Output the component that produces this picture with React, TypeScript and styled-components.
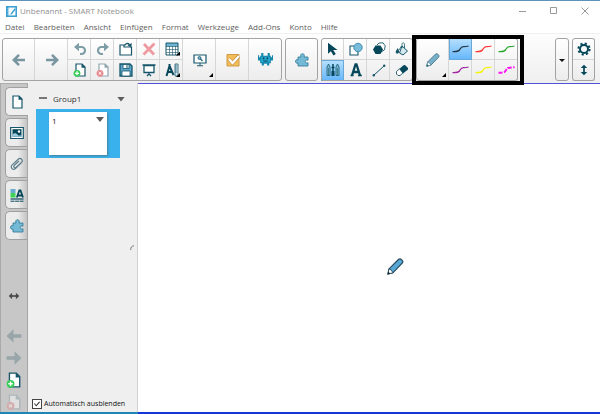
import React, { useState } from "react";
import styled, { createGlobalStyle, css } from "styled-components";

const ink = "#17566a";
const dark = "#06475a";
const sky = "#6fb4d3";
const muted = "#7f9da6";

const GlobalStyle = createGlobalStyle`
  *, *::before, *::after { box-sizing: border-box; }
  body { margin: 0; background: #fff; }
  body, button, input { font-family: "Open Sans", "Noto Sans", sans-serif; font-size: 8px; }
  button { margin: 0; padding: 0; border: 0; background: none; color: inherit; }
  svg { display: block; flex: none; }
`;

const Window = styled.div`
  display: flex;
  flex-direction: column;
  min-height: 100vh;
  border-top: 1px solid #5b93bd;
  background: #fff;
`;

const TitleBar = styled.header`
  display: flex;
  align-items: center;
  height: 20px;
  padding-left: 6px;
  gap: 3px;
  color: #909090;
`;

const Title = styled.h1`
  flex: 1;
  margin: 0;
  font-size: 8px;
  font-weight: 400;
  line-height: 12px;
`;

const WindowControls = styled.div`
  display: flex;
`;

const WindowButton = styled.button`
  display: grid;
  place-items: center;
  width: 31px;
  height: 18px;
`;

const MenuBar = styled.nav`
  display: flex;
  align-items: center;
  gap: 9px;
  height: 13px;
  padding-left: 5px;
  border-bottom: 1px solid #f0f0f0;
`;

const MenuItem = styled.button`
  line-height: 12px;
  color: #606060;
`;

const Toolbar = styled.div`
  display: flex;
  gap: 3px;
  height: 49px;
  padding: 4px 5px 2px 2px;
  background: linear-gradient(#fdfdfd, #efefef);
`;

const Group = styled.div`
  position: relative;
  display: flex;
  border-radius: 3px;
  background: linear-gradient(#fff, #ececec);
  &::before {
    content: "";
    position: absolute;
    inset: 0;
    z-index: 1;
    border: 1px solid #a3a3a3;
    border-radius: 3px;
    pointer-events: none;
  }
`;

const PenGroup = styled(Group)`
  &::after {
    content: "";
    position: absolute;
    inset: -3px -6px -4px -4px;
    z-index: 2;
    border: 4px solid #000;
    pointer-events: none;
  }
`;

const Spacer = styled.div`
  flex: 1;
`;

const Grid = styled.div<{ $cols: number }>`
  display: grid;
  grid-template-columns: repeat(${(p) => p.$cols}, 23px);
  grid-template-rows: 1fr 1fr;
`;

const SmallTool = styled.button<{ $active?: boolean }>`
  position: relative;
  display: grid;
  place-items: center;
  box-shadow: inset -1px -1px 0 #d6d6d6;
  ${(p) =>
    p.$active &&
    css`
      background: linear-gradient(#b9e1fd, #62b5fb);
      box-shadow: inset 0 0 0 1px #68a9da;
    `}
`;

const LargeTool = styled.button<{ $last?: boolean; $narrow?: boolean }>`
  position: relative;
  display: grid;
  place-items: center;
  width: ${(p) => (p.$narrow ? 14 : 33)}px;
  box-shadow: inset ${(p) => (p.$last ? 0 : -1)}px 0 0 #d6d6d6;
`;

const Corner = styled.span`
  position: absolute;
  right: 3px;
  bottom: 4px;
  width: 4px;
  height: 4px;
  background: #000;
  clip-path: polygon(100% 0, 100% 100%, 0 100%);
`;

const Workspace = styled.div`
  display: flex;
  flex: 1;
  border-bottom: 2px solid #1d86b4;
`;

const TabStrip = styled.aside`
  display: flex;
  flex-direction: column;
  width: 28px;
  border-left: 1px solid #aaa;
  border-top: 1px solid #adadad;
  border-right: 1px solid #a6a6a6;
  background: #c7c7c7;
`;

const TabList = styled.div`
  display: flex;
  flex-direction: column;
  gap: 2px;
  padding: 3px 0 0 4px;
`;

const Tab = styled.button<{ $active?: boolean }>`
  display: grid;
  place-items: center;
  height: 29px;
  margin-right: ${(p) => (p.$active ? -1 : 0)}px;
  border: 1px solid #a0a0a0;
  border-right: 0;
  border-radius: 5px 0 0 5px;
  background: ${(p) =>
    p.$active ? "#efefef" : "linear-gradient(90deg, #ececec 55%, #c4c4c4)"};
`;

const StripTools = styled.div`
  display: flex;
  flex: 1;
  flex-direction: column;
  align-items: center;
  justify-content: flex-end;
  gap: 6px;
  padding-bottom: 2px;
`;

const StripButton = styled.button<{ $apart?: boolean; $faded?: boolean }>`
  display: grid;
  place-items: center;
  width: 26px;
  height: 16px;
  margin-bottom: ${(p) => (p.$apart ? 18 : 0)}px;
  opacity: ${(p) => (p.$faded ? 0.45 : 1)};
`;

const Panel = styled.section`
  display: flex;
  flex-direction: column;
  width: 110px;
  border-right: 1px solid #d2d2d2;
  background: #efefef;
`;

const GroupHeader = styled.button`
  display: flex;
  align-items: center;
  gap: 6px;
  height: 26px;
  padding: 4px 12px 0 11px;
  color: #333;
`;

const GroupName = styled.span`
  flex: 1;
  text-align: left;
`;

const Selection = styled.div`
  display: flex;
  justify-content: center;
  margin: 0 17px 0 8px;
  padding: 3px 0;
  background: #38b1ec;
`;

const Thumbnail = styled.button`
  display: flex;
  align-items: flex-start;
  justify-content: space-between;
  width: 58px;
  height: 43px;
  padding: 3px 3px 0 3px;
  background: #fff;
  box-shadow: 1px 1px 2px #4a7f9c;
  color: #222;
  line-height: 11px;
`;

const Resizer = styled.div`
  display: flex;
  flex: 1;
  align-items: center;
  justify-content: flex-end;
  padding: 0 3px 62px 0;
`;

const Down = styled.span<{ $small?: boolean }>`
  width: ${(p) => (p.$small ? 6 : 8)}px;
  height: ${(p) => (p.$small ? 3 : 5)}px;
  margin-top: 2px;
  background: ${(p) => (p.$small ? "#111" : "#5c5c5c")};
  clip-path: polygon(0 0, 100% 0, 50% 100%);
`;

const AutoHide = styled.label`
  display: flex;
  align-items: center;
  gap: 2px;
  padding: 0 0 3px 4px;
  color: #111;
  font-size: 7px;
  line-height: 10px;
  white-space: nowrap;
`;

const Check = styled.input`
  position: relative;
  appearance: none;
  width: 10px;
  height: 10px;
  margin: 0;
  border: 1px solid #444;
  background: #fff;
  &:checked::after {
    content: "";
    position: absolute;
    inset: 1px;
    background: #333;
    clip-path: polygon(0 45%, 14% 36%, 36% 65%, 86% 8%, 100% 20%, 37% 92%);
  }
`;

const Canvas = styled.main`
  position: relative;
  flex: 1;
  margin-bottom: -2px;
  border-top: 1px solid #5050d8;
  border-bottom: 2px solid #1835d8;
  background: #fff;
`;

const PenPointer = styled.div`
  position: absolute;
  left: 54%;
  top: 53%;
`;

type IconProps = { size?: number; children: React.ReactNode };
const Icon = ({ size = 14, children }: IconProps) => (
  <svg width={size} height={size} viewBox="0 0 14 14" fill="none" aria-hidden="true">
    {children}
  </svg>
);

const LogoIcon = () => (
  <Icon size={11}>
    <path d="M0 0h14v14H0z" fill="#3b9fd2" />
    <path d="M3 2h9v10H3z" fill="#fff" />
    <path d="M1.500 3.500h3M1.500 7h3M1.500 10.500h3" stroke="#9ad0ea" />
    <path d="M6 9.500 11 3l1.500 1L7.500 10.500 5.500 11z" fill="#3b9fd2" />
  </Icon>
);
const ArrowIcon = ({ right, size, color = "#7996a0" }: { right?: boolean; size?: number; color?: string }) => (
  <Icon size={size}>
    <g transform={right ? "rotate(180 7 7)" : undefined}>
      <path d="M.5 7 6.500 1v4.500h7v3h-7V13z" fill={color} />
    </g>
  </Icon>
);
const NavIcon = ({ right }: { right?: boolean }) => (
  <Icon>
    <g transform={right ? "rotate(180 7 7)" : undefined}>
      <path d="M7 1.800 1.800 7 7 12.200M2 7h11" stroke="#7996a0" strokeWidth="2.600" />
    </g>
  </Icon>
);
const UndoIcon = ({ redo }: { redo?: boolean }) => (
  <Icon>
    <g transform={redo ? "translate(14 0) scale(-1 1)" : undefined}>
      <path d="M3 5h5.500a3.500 3.500 0 0 1 0 7H7" stroke={muted} strokeWidth="2.200" />
      <path d="M1 5 6 .8v8.400z" fill={muted} />
    </g>
  </Icon>
);
const PageIcon = ({ mark, size }: { mark?: "add" | "remove"; size?: number }) => {
  const gone = mark === "remove";
  const line = gone ? "#8fa6ae" : ink;
  return (
    <Icon size={size}>
      <path d="M3 1h6l3 3v9H3z" fill="#fff" stroke={line} strokeWidth="1.200" />
      <path d="M8.500.8v4h4z" fill={line} />
      {mark && <circle cx="4" cy="10.300" r="3.400" fill={gone ? "#e98a91" : "#35cf58"} />}
      {mark === "add" && <path d="M4 8.300v4M2 10.300h4" stroke="#fff" strokeWidth="1.200" />}
      {gone && <path d="m2.700 9 2.600 2.600m0-2.600-2.600 2.600" stroke="#fff" />}
    </Icon>
  );
};
const OpenIcon = () => (
  <Icon>
    <path d="M1 13V3h4v2h7.500v8z" fill="#fff" stroke={ink} strokeWidth="1.200" />
    <path d="M5.500 3.500c1-2.200 3.500-2.600 5-.8" stroke={ink} strokeWidth="1.400" />
    <path d="m12.800 1-.6 4.500-3.500-2z" fill={ink} />
  </Icon>
);
const DeleteIcon = () => (
  <Icon>
    <path d="m2 2 10 10.500M12.500 1.500 1.500 12.500" stroke="#ee9aa0" strokeWidth="2.800" />
  </Icon>
);
const TableIcon = () => (
  <Icon>
    <path d="M1 1h12v12H1z" fill="#fff" />
    <path d="M1 1h12v3.500H1z" fill={sky} />
    <path d="M1 1h12v12H1z" stroke={ink} />
    <path d="M1 4.500h12M1 7.500h12M1 10.500h12M4.500 4v9M7.500 4v9M10.500 4v9" stroke={ink} strokeWidth=".6" />
  </Icon>
);
const SaveIcon = () => (
  <Icon>
    <path d="M1 1h10l2 2v10H1z" fill="#5ba6ca" stroke={ink} strokeWidth="1.300" />
    <path d="M4 1.500h6v4H4zM3 8h8v5H3z" fill="#fff" stroke={ink} strokeWidth=".8" />
    <path d="M8 2v3" stroke={ink} />
  </Icon>
);
const ScreenIcon = () => (
  <Icon>
    <path d="M.5 2h13M2 2.500h10v7H2zM7 10v2M5 13l2-2 2 2" fill="#fff" stroke={ink} strokeWidth="1.300" />
  </Icon>
);
const MeasureIcon = () => (
  <Icon>
    <path d="M4.500 1v2M4.500 3 1.500 13M4.500 3l4 9M2.500 9h5" stroke={dark} strokeWidth="2" />
    <path d="M10 1h3v12h-3z" fill="#d9edf5" stroke={ink} strokeWidth=".8" />
    <path d="M10 3h2M10 5h2M10 7h2M10 9h2" stroke={ink} strokeWidth=".7" />
  </Icon>
);
const MonitorIcon = () => (
  <Icon>
    <path d="M1 2h12v8H1z" fill="#fff" stroke={ink} strokeWidth="1.200" />
    <circle cx="6.500" cy="5" r="1.500" fill={sky} stroke={ink} strokeWidth=".8" />
    <path d="m7.500 6 2 2M7 10v2M4 12.700h6" stroke={ink} strokeWidth="1.100" />
  </Icon>
);
const TaskIcon = () => (
  <Icon>
    <path d="M1 1.500h12v11.500H1z" fill="#f2bd58" stroke="#cf9b45" />
    <path d="m3 6 3.500 4L13 3" stroke="#b6853a" strokeWidth="3.400" />
    <path d="m3 6 3.500 4L13 3" stroke="#fff" strokeWidth="2.300" />
  </Icon>
);
const MonsterIcon = () => (
  <Icon size={15}>
    <path d="M3 1h2v2.500h4V1h2v2.500h1V5h1V3h1v5h-2v2.500h-1.500v2H8.500v-1.500h-3v1.500H3.500v-2H2V8H0V3h1v2h1V3.500h1z" fill="#1688ae" />
    <path d="M3 4.500h8V9.500H3z" fill="#26a8d0" />
    <path d="M4.500 5.200H6v1.500H4.500zM8 5.200h1.500v1.500H8zM5 8h4v.8H5z" fill="#064159" />
  </Icon>
);
const PuzzleIcon = () => (
  <Icon>
    <path d="M3 4h3c-.8-1.800 0-3.300 1.500-3.300S9.800 2.200 9 4h4v3.200c-2-.8-2.700.2-2.700 1.300s.7 2 2.700 1.300V13H3v-3C1.500 10.700.5 9.700.5 8.300S1.500 6.200 3 7z" fill="#74b9d6" stroke="#397f9b" strokeWidth=".9" />
  </Icon>
);
const SelectIcon = () => (
  <Icon>
    <path d="M2 .8v11l2.900-2.600L7.500 13.500l2.300-1.400L7.200 8h4.300z" fill={dark} />
  </Icon>
);
const ShapesIcon = () => (
  <Icon>
    <path d="M1 4h8v9H1z" fill="#fff" stroke={ink} strokeWidth="1.100" />
    <circle cx="9" cy="5.500" r="4.200" fill="#79bbd9" stroke="#3f8fb2" />
  </Icon>
);
const PolygonIcon = () => (
  <Icon>
    <path d="m5 3 2-2 4-.2 2.200 3-.7 4-3 2" fill="#fff" stroke={ink} strokeWidth=".9" />
    <path d="M3.500 3.500h5L11 7.500 8.500 12h-5L1 7.500z" fill={dark} />
  </Icon>
);
const BucketIcon = () => (
  <Icon>
    <path d="m7 4 5.500 5L8 13 4.500 11z" fill="#d4e8ef" stroke={ink} />
    <path d="M7 6V2.500C7 .3 9.500.3 9.500 2.500V6M6.500 4 4 8" stroke={ink} strokeWidth=".8" />
    <path d="M2.500 6C4 8 4.700 9.500 3.700 11c-1.300 1.200-3 .5-3-1C.7 8.500 2 8 2.500 6z" fill={ink} />
  </Icon>
);
const PensIcon = () => (
  <Icon>
    <path d="M1 12.500V4l1.500-3L4 4v8.500zM10 12.500V4l1.500-3L13 4v8.500z" fill="#80bfdb" stroke={ink} strokeWidth=".8" />
    <path d="M7 1v12M5.500 4.500h3" stroke={dark} strokeWidth="1.500" />
    <path d="M2.500 5v7M11.500 5v7" stroke={ink} strokeWidth=".6" />
    <path d="M5.500 8h3v5h-3z" fill={dark} />
  </Icon>
);
const TextIcon = () => (
  <Icon>
    <path d="m3 12.500 3.500-11h1l3.500 11M4.500 9h5" stroke={dark} strokeWidth="2.300" />
    <path d="M1.500 12.500h3M9 12.500h3.800" stroke={dark} strokeWidth="1.300" />
  </Icon>
);
const LineIcon = () => (
  <Icon>
    <path d="M2 12 12 3" stroke={ink} />
    <circle cx="1.800" cy="12.200" r="1.200" fill={ink} />
    <circle cx="12.200" cy="2.800" r="1.200" fill={ink} />
  </Icon>
);
const EraserIcon = () => (
  <Icon>
    <path d="m1.500 8.500 3-2.700 3.500 4L5 12.500H3L1.500 11z" fill="#fff" stroke={ink} strokeWidth=".9" />
    <path d="m4.500 5.800 4-3.500L10 2l3 3v1.500L8 10.500z" fill={dark} />
  </Icon>
);
const PencilIcon = ({ size = 14, vivid }: { size?: number; vivid?: boolean }) => {
  const line = vivid ? "#24485a" : "#4c7f95";
  return (
    <Icon size={size}>
      <path d="M.8 13.200 1.600 9 9.600 1c1.600-1.100 4.300 1.400 3.100 3.100L4.900 12.200z" fill={vivid ? "#58a8d6" : "#78b0ca"} stroke={line} />
      <path d="m.8 13.200.8-4.200 1.900.8 1.400 2.400z" fill="#fff" stroke={line} strokeWidth=".7" />
      <path d="m.5 13.500.5-2.300 1.700 1.600z" fill={vivid ? "#182f3a" : ink} />
    </Icon>
  );
};
const Stroke = ({ color, dashed }: { color: string; dashed?: boolean }) => (
  <svg width="17" height="8" viewBox="0 0 17 8" fill="none" aria-hidden="true">
    <path
      d="M.5 6.700c3.500 0 5.500.3 7-1.700C9 2.500 9 1.800 11.500 1.700c2 0 3.500-.2 5-.7"
      stroke={color}
      strokeWidth={dashed ? 2 : 1.300}
      strokeDasharray={dashed ? "4 1.500" : undefined}
    />
  </svg>
);
const GearIcon = () => (
  <Icon>
    <circle cx="7" cy="7" r="4" stroke={dark} strokeWidth="2" />
    <circle cx="7" cy="7" r="5.600" stroke={dark} strokeWidth="2" strokeDasharray="2.200 2.198" />
  </Icon>
);
const VerticalIcon = () => (
  <Icon size={12}>
    <path d="M7 3v8" stroke={dark} strokeWidth="2" />
    <path d="m7 .8 3.800 4H3.200zM7 13.200l3.800-4H3.200z" fill={dark} />
  </Icon>
);
const HorizontalIcon = () => (
  <Icon size={12}>
    <path d="M3 7h8" stroke="#4c4c4c" strokeWidth="2" />
    <path d="m.8 7 4-3.800v7.600zM13.200 7l-4-3.800v7.600z" fill="#4c4c4c" />
  </Icon>
);
const PictureIcon = () => (
  <Icon>
    <path d="M.7 1.500h12.600v11H.7z" fill="#fff" stroke={ink} strokeWidth="1.200" />
    <path d="M2.500 3.200h9v7.600h-9z" fill={dark} />
    <circle cx="9" cy="5.500" r="1.200" fill="#fff" />
    <path d="M2.500 8.500c2-2 4-1 5 .2s2.500 1 4 .3v1.800h-9z" fill="#9ccce0" />
  </Icon>
);
const ClipIcon = () => (
  <Icon>
    <path d="m11.500 5.500-6 6C3 13.800-.3 10.500 2 8.200l6.200-6C10.500.3 13.700 3 11.500 5.500L6.300 10.300C4.500 11.500 3 10 4.200 8.500L9 4" stroke="#5c7e8b" strokeWidth="1.200" />
  </Icon>
);
const PropertiesIcon = () => (
  <Icon>
    <path d="M.5 1h5v4h-5z" fill="#67abd0" />
    <path d="M.5 5h5v4.500h-5z" fill="#3fd453" />
    <path d="m6.800 9.500 2.500-7h1.200l2.500 7M8 7.500h4" stroke={dark} strokeWidth="1.800" />
    <path d="M.5 11h13" stroke={dark} strokeWidth="1.200" />
    <path d="M.5 13.200h13" stroke={dark} strokeDasharray="4 .6" />
  </Icon>
);

type Tool = { label: string; icon: React.ReactNode; corner?: boolean; active?: boolean };

const editTools: Tool[] = [
  { label: "Rückgängig", icon: <UndoIcon /> },
  { label: "Wiederherstellen", icon: <UndoIcon redo /> },
  { label: "Öffnen", icon: <OpenIcon /> },
  { label: "Löschen", icon: <DeleteIcon /> },
  { label: "Tabelle", icon: <TableIcon />, corner: true },
  { label: "Seite hinzufügen", icon: <PageIcon mark="add" /> },
  { label: "Seite löschen", icon: <PageIcon mark="remove" /> },
  { label: "Speichern", icon: <SaveIcon /> },
  { label: "Bildschirmabdeckung", icon: <ScreenIcon /> },
  { label: "Messwerkzeuge", icon: <MeasureIcon />, corner: true },
];

const drawTools: Tool[] = [
  { label: "Auswählen", icon: <SelectIcon /> },
  { label: "Formen", icon: <ShapesIcon /> },
  { label: "Vielecke", icon: <PolygonIcon /> },
  { label: "Füllen", icon: <BucketIcon /> },
  { label: "Stifte", icon: <PensIcon />, active: true },
  { label: "Text", icon: <TextIcon /> },
  { label: "Linien", icon: <LineIcon /> },
  { label: "Radierer", icon: <EraserIcon /> },
];

const penTools: Tool[] = [
  { label: "Schwarz", icon: <Stroke color="#263743" />, active: true },
  { label: "Rot", icon: <Stroke color="#ff3434" /> },
  { label: "Grün", icon: <Stroke color="#2ba52f" /> },
  { label: "Violett", icon: <Stroke color="#a028a0" /> },
  { label: "Gelb", icon: <Stroke color="#f5f500" /> },
  { label: "Magenta", icon: <Stroke color="#ff12f4" dashed /> },
];

const menus = ["Datei", "Bearbeiten", "Ansicht", "Einfügen", "Format", "Werkzeuge", "Add-Ons", "Konto", "Hilfe"];

const tabs: Tool[] = [
  { label: "Seiten", icon: <PageIcon />, active: true },
  { label: "Galerie", icon: <PictureIcon /> },
  { label: "Anlagen", icon: <ClipIcon /> },
  { label: "Eigenschaften", icon: <PropertiesIcon /> },
  { label: "Erweiterungen", icon: <PuzzleIcon /> },
];

const ToolGrid = ({ tools, cols }: { tools: Tool[]; cols: number }) => (
  <Grid $cols={cols}>
    {tools.map((t) => (
      <SmallTool key={t.label} aria-label={t.label} $active={t.active}>
        {t.icon}
        {t.corner && <Corner />}
      </SmallTool>
    ))}
  </Grid>
);

export default function App() {
  const [autoHide, setAutoHide] = useState(true);
  return (
    <Window>
      <GlobalStyle />
      <TitleBar>
        <LogoIcon />
        <Title>Unbenannt - SMART Notebook</Title>
        <WindowControls>
          <WindowButton aria-label="Minimieren">
            <svg width="8" height="8" aria-hidden="true"><path d="M0 4.500h7" stroke="#999" /></svg>
          </WindowButton>
          <WindowButton aria-label="Maximieren">
            <svg width="8" height="8" fill="none" aria-hidden="true"><path d="M.5.5h6v6h-6z" stroke="#999" /></svg>
          </WindowButton>
          <WindowButton aria-label="Schließen">
            <svg width="8" height="8" aria-hidden="true"><path d="m.5.5 7 7m0-7-7 7" stroke="#999" /></svg>
          </WindowButton>
        </WindowControls>
      </TitleBar>
      <MenuBar>
        {menus.map((m) => (
          <MenuItem key={m}>{m}</MenuItem>
        ))}
      </MenuBar>
      <Toolbar>
        <Group>
          <LargeTool aria-label="Vorherige Seite"><NavIcon /></LargeTool>
          <LargeTool aria-label="Nächste Seite"><NavIcon right /></LargeTool>
          <ToolGrid tools={editTools} cols={5} />
          <LargeTool aria-label="Anzeige"><MonitorIcon /><Corner /></LargeTool>
          <LargeTool aria-label="Aufgaben"><TaskIcon /></LargeTool>
          <LargeTool aria-label="Aktivitäten" $last><MonsterIcon /></LargeTool>
        </Group>
        <Group>
          <LargeTool aria-label="Add-Ons" $last><PuzzleIcon /></LargeTool>
        </Group>
        <Group>
          <ToolGrid tools={drawTools} cols={4} />
        </Group>
        <PenGroup>
          <LargeTool aria-label="Stifttyp"><PencilIcon /><Corner /></LargeTool>
          <ToolGrid tools={penTools} cols={3} />
        </PenGroup>
        <Spacer />
        <Group>
          <LargeTool aria-label="Weitere" $narrow $last><Down $small /></LargeTool>
        </Group>
        <Group>
          <Grid $cols={1}>
            <SmallTool aria-label="Einstellungen"><GearIcon /></SmallTool>
            <SmallTool aria-label="Symbolleiste verschieben"><VerticalIcon /></SmallTool>
          </Grid>
        </Group>
      </Toolbar>
      <Workspace>
        <TabStrip>
          <TabList role="tablist">
            {tabs.map((t) => (
              <Tab key={t.label} role="tab" aria-label={t.label} aria-selected={!!t.active} $active={t.active}>
                {t.icon}
              </Tab>
            ))}
          </TabList>
          <StripTools>
            <StripButton aria-label="Seitenleiste verschieben" $apart><HorizontalIcon /></StripButton>
            <StripButton aria-label="Zurück"><ArrowIcon size={16} color="#98a5a9" /></StripButton>
            <StripButton aria-label="Weiter"><ArrowIcon right size={16} color="#98a5a9" /></StripButton>
            <StripButton aria-label="Seite hinzufügen"><PageIcon mark="add" size={16} /></StripButton>
            <StripButton aria-label="Seite löschen" $faded><PageIcon mark="remove" size={16} /></StripButton>
          </StripTools>
        </TabStrip>
        <Panel>
          <GroupHeader>
            <svg width="8" height="2" viewBox="0 0 8 2" aria-hidden="true">
              <path d="M0 0h8v2H0z" fill="#777" />
            </svg>
            <GroupName>Group1</GroupName>
            <Down />
          </GroupHeader>
          <Selection>
            <Thumbnail aria-label="Seite 1">1<Down /></Thumbnail>
          </Selection>
          <Resizer>
            <svg width="4" height="5" viewBox="0 0 4 5" fill="none" aria-hidden="true">
              <path d="M.8 5C.5 2.500 1.500 1 4 .8" stroke="#777" />
            </svg>
          </Resizer>
          <AutoHide>
            <Check type="checkbox" checked={autoHide} onChange={(e) => setAutoHide(e.target.checked)} />
            Automatisch ausblenden
          </AutoHide>
        </Panel>
        <Canvas>
          <PenPointer><PencilIcon size={17} vivid /></PenPointer>
        </Canvas>
      </Workspace>
    </Window>
  );
}
